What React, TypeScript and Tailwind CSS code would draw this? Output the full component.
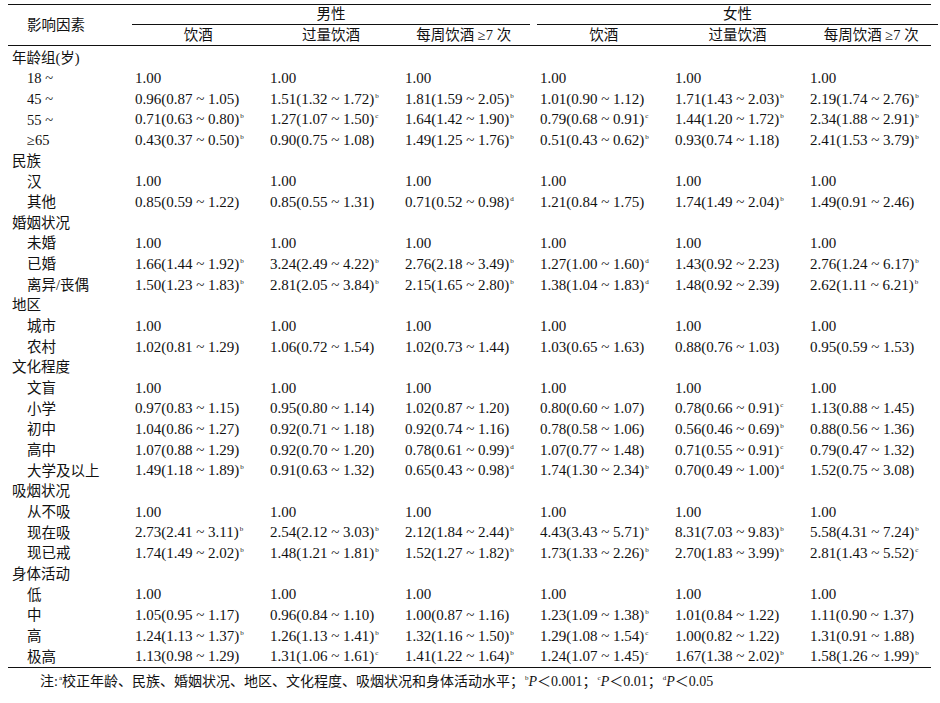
const serif = "font-['Liberation_Serif','Noto_Sans_CJK_SC',serif]"

type Cell = [string, string?]

const groups: { name: string; rows: { label: string; cells: Cell[] }[] }[] = [
  {
    name: "年龄组(岁)",
    rows: [
      { label: "18 ~", cells: [["1.00"], ["1.00"], ["1.00"], ["1.00"], ["1.00"], ["1.00"]] },
      {
        label: "45 ~",
        cells: [
          ["0.96(0.87 ~ 1.05)"],
          ["1.51(1.32 ~ 1.72)", "b"],
          ["1.81(1.59 ~ 2.05)", "b"],
          ["1.01(0.90 ~ 1.12)"],
          ["1.71(1.43 ~ 2.03)", "b"],
          ["2.19(1.74 ~ 2.76)", "b"],
        ],
      },
      {
        label: "55 ~",
        cells: [
          ["0.71(0.63 ~ 0.80)", "b"],
          ["1.27(1.07 ~ 1.50)", "c"],
          ["1.64(1.42 ~ 1.90)", "b"],
          ["0.79(0.68 ~ 0.91)", "c"],
          ["1.44(1.20 ~ 1.72)", "b"],
          ["2.34(1.88 ~ 2.91)", "b"],
        ],
      },
      {
        label: "≥65",
        cells: [
          ["0.43(0.37 ~ 0.50)", "b"],
          ["0.90(0.75 ~ 1.08)"],
          ["1.49(1.25 ~ 1.76)", "b"],
          ["0.51(0.43 ~ 0.62)", "b"],
          ["0.93(0.74 ~ 1.18)"],
          ["2.41(1.53 ~ 3.79)", "b"],
        ],
      },
    ],
  },
  {
    name: "民族",
    rows: [
      { label: "汉", cells: [["1.00"], ["1.00"], ["1.00"], ["1.00"], ["1.00"], ["1.00"]] },
      {
        label: "其他",
        cells: [
          ["0.85(0.59 ~ 1.22)"],
          ["0.85(0.55 ~ 1.31)"],
          ["0.71(0.52 ~ 0.98)", "d"],
          ["1.21(0.84 ~ 1.75)"],
          ["1.74(1.49 ~ 2.04)", "b"],
          ["1.49(0.91 ~ 2.46)"],
        ],
      },
    ],
  },
  {
    name: "婚姻状况",
    rows: [
      { label: "未婚", cells: [["1.00"], ["1.00"], ["1.00"], ["1.00"], ["1.00"], ["1.00"]] },
      {
        label: "已婚",
        cells: [
          ["1.66(1.44 ~ 1.92)", "b"],
          ["3.24(2.49 ~ 4.22)", "b"],
          ["2.76(2.18 ~ 3.49)", "b"],
          ["1.27(1.00 ~ 1.60)", "d"],
          ["1.43(0.92 ~ 2.23)"],
          ["2.76(1.24 ~ 6.17)", "b"],
        ],
      },
      {
        label: "离异/丧偶",
        cells: [
          ["1.50(1.23 ~ 1.83)", "b"],
          ["2.81(2.05 ~ 3.84)", "b"],
          ["2.15(1.65 ~ 2.80)", "b"],
          ["1.38(1.04 ~ 1.83)", "d"],
          ["1.48(0.92 ~ 2.39)"],
          ["2.62(1.11 ~ 6.21)", "b"],
        ],
      },
    ],
  },
  {
    name: "地区",
    rows: [
      { label: "城市", cells: [["1.00"], ["1.00"], ["1.00"], ["1.00"], ["1.00"], ["1.00"]] },
      {
        label: "农村",
        cells: [
          ["1.02(0.81 ~ 1.29)"],
          ["1.06(0.72 ~ 1.54)"],
          ["1.02(0.73 ~ 1.44)"],
          ["1.03(0.65 ~ 1.63)"],
          ["0.88(0.76 ~ 1.03)"],
          ["0.95(0.59 ~ 1.53)"],
        ],
      },
    ],
  },
  {
    name: "文化程度",
    rows: [
      { label: "文盲", cells: [["1.00"], ["1.00"], ["1.00"], ["1.00"], ["1.00"], ["1.00"]] },
      {
        label: "小学",
        cells: [
          ["0.97(0.83 ~ 1.15)"],
          ["0.95(0.80 ~ 1.14)"],
          ["1.02(0.87 ~ 1.20)"],
          ["0.80(0.60 ~ 1.07)"],
          ["0.78(0.66 ~ 0.91)", "c"],
          ["1.13(0.88 ~ 1.45)"],
        ],
      },
      {
        label: "初中",
        cells: [
          ["1.04(0.86 ~ 1.27)"],
          ["0.92(0.71 ~ 1.18)"],
          ["0.92(0.74 ~ 1.16)"],
          ["0.78(0.58 ~ 1.06)"],
          ["0.56(0.46 ~ 0.69)", "b"],
          ["0.88(0.56 ~ 1.36)"],
        ],
      },
      {
        label: "高中",
        cells: [
          ["1.07(0.88 ~ 1.29)"],
          ["0.92(0.70 ~ 1.20)"],
          ["0.78(0.61 ~ 0.99)", "d"],
          ["1.07(0.77 ~ 1.48)"],
          ["0.71(0.55 ~ 0.91)", "c"],
          ["0.79(0.47 ~ 1.32)"],
        ],
      },
      {
        label: "大学及以上",
        cells: [
          ["1.49(1.18 ~ 1.89)", "b"],
          ["0.91(0.63 ~ 1.32)"],
          ["0.65(0.43 ~ 0.98)", "d"],
          ["1.74(1.30 ~ 2.34)", "b"],
          ["0.70(0.49 ~ 1.00)", "d"],
          ["1.52(0.75 ~ 3.08)"],
        ],
      },
    ],
  },
  {
    name: "吸烟状况",
    rows: [
      { label: "从不吸", cells: [["1.00"], ["1.00"], ["1.00"], ["1.00"], ["1.00"], ["1.00"]] },
      {
        label: "现在吸",
        cells: [
          ["2.73(2.41 ~ 3.11)", "b"],
          ["2.54(2.12 ~ 3.03)", "b"],
          ["2.12(1.84 ~ 2.44)", "b"],
          ["4.43(3.43 ~ 5.71)", "b"],
          ["8.31(7.03 ~ 9.83)", "b"],
          ["5.58(4.31 ~ 7.24)", "b"],
        ],
      },
      {
        label: "现已戒",
        cells: [
          ["1.74(1.49 ~ 2.02)", "b"],
          ["1.48(1.21 ~ 1.81)", "b"],
          ["1.52(1.27 ~ 1.82)", "b"],
          ["1.73(1.33 ~ 2.26)", "b"],
          ["2.70(1.83 ~ 3.99)", "b"],
          ["2.81(1.43 ~ 5.52)", "c"],
        ],
      },
    ],
  },
  {
    name: "身体活动",
    rows: [
      { label: "低", cells: [["1.00"], ["1.00"], ["1.00"], ["1.00"], ["1.00"], ["1.00"]] },
      {
        label: "中",
        cells: [
          ["1.05(0.95 ~ 1.17)"],
          ["0.96(0.84 ~ 1.10)"],
          ["1.00(0.87 ~ 1.16)"],
          ["1.23(1.09 ~ 1.38)", "b"],
          ["1.01(0.84 ~ 1.22)"],
          ["1.11(0.90 ~ 1.37)"],
        ],
      },
      {
        label: "高",
        cells: [
          ["1.24(1.13 ~ 1.37)", "b"],
          ["1.26(1.13 ~ 1.41)", "b"],
          ["1.32(1.16 ~ 1.50)", "b"],
          ["1.29(1.08 ~ 1.54)", "c"],
          ["1.00(0.82 ~ 1.22)"],
          ["1.31(0.91 ~ 1.88)"],
        ],
      },
      {
        label: "极高",
        cells: [
          ["1.13(0.98 ~ 1.29)"],
          ["1.31(1.06 ~ 1.61)", "c"],
          ["1.41(1.22 ~ 1.64)", "b"],
          ["1.24(1.07 ~ 1.45)", "c"],
          ["1.67(1.38 ~ 2.02)", "b"],
          ["1.58(1.26 ~ 1.99)", "b"],
        ],
      },
    ],
  },
]

const subCols = ["饮酒", "过量饮酒", "每周饮酒 ≥7 次"]

function Sup({ t }: { t: string }) {
  return <span className="relative -top-[6px] ml-[1px] align-baseline text-[7px]">{t}</span>
}

function Row({ label, cells, sub }: { label: string; cells?: Cell[]; sub?: boolean }) {
  return (
    <div className="grid h-[20.66px] grid-cols-[127px_135px_135px_135px_135px_135px_121px] items-center">
      <div className={sub ? "pl-[19px]" : "pl-[4px]"}>{label}</div>
      {cells?.map(([v, s], i) => (
        <div key={i} className="whitespace-nowrap text-[15px]">
          {v}
          {s && <Sup t={s} />}
        </div>
      ))}
    </div>
  )
}

export default function App() {
  return (
    <div className={`h-[703px] w-[940px] bg-white pl-[8px] pt-[4px] text-[14.5px] leading-none text-[#111] ${serif}`}>
      <div className="w-[923px]">
        {/* header */}
        <div className="grid grid-cols-[117px_398px_401px] gap-x-[7px] border-t border-[#111] border-b">
          <div className="row-span-2 flex items-center pl-[19px]">影响因素</div>
          <div className="flex h-[20px] items-center justify-center border-b border-[#111]">男性</div>
          <div className="flex h-[20px] items-center justify-center border-b border-[#111]">女性</div>
          <div className="grid h-[20px] grid-cols-3 items-center text-center">
            {subCols.map((c) => (
              <div key={c}>{c}</div>
            ))}
          </div>
          <div className="grid h-[20px] grid-cols-3 items-center text-center">
            {subCols.map((c) => (
              <div key={c}>{c}</div>
            ))}
          </div>
        </div>

        {/* body */}
        <div className="border-b border-[#111] pt-[1.5px]">
          {groups.map((g) => (
            <div key={g.name}>
              <Row label={g.name} />
              {g.rows.map((r) => (
                <Row key={r.label} label={r.label} cells={r.cells} sub />
              ))}
            </div>
          ))}
        </div>

        <div className="pl-[32px] pt-[7px] text-[14px]">
          注:<Sup t="a" />校正年龄、民族、婚姻状况、地区、文化程度、吸烟状况和身体活动水平；<Sup t="b" />
          <i>P</i>＜0.001；<Sup t="c" />
          <i>P</i>＜0.01；<Sup t="d" />
          <i>P</i>＜0.05
        </div>
      </div>
    </div>
  )
}
